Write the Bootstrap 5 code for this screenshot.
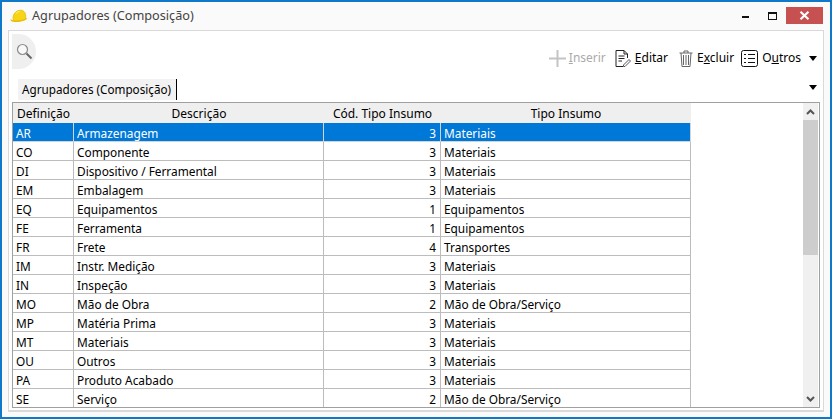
<!DOCTYPE html>
<html lang="pt"><head><meta charset="utf-8"><title>Agrupadores</title>
<link href="https://cdn.jsdelivr.net/npm/bootstrap@5.3.0/dist/css/bootstrap.min.css" rel="stylesheet">
<style>
html,body{margin:0;height:419px;overflow:hidden;background:#fff}
body{font-family:"Noto Sans","Liberation Sans",sans-serif;font-size:12px;color:#000}
.win{width:832px;height:419px;border:2px solid #0f78c8;background:#fafafa}
.ttl{height:28px;flex:none;padding-left:8px;padding-right:7px}
.ttl-text{font-size:12.7px;color:#444;margin-left:4px}
.wb{width:27px;height:17px;margin-top:-1px}
.wb-close{width:37px;background:#c75050}
.panel{margin:0 6px;height:382px;flex:none;border:1px solid #d9d9d9;border-bottom-width:2px;background:#fff;padding:3px}
.toprow{height:45px;flex:none;padding-right:3px}
.srch{width:24px;height:35px;background:#efefef;border-radius:0 18px 18px 0}
.tools{margin-top:15px}
.tool{gap:4px}
.tool.off{color:#aaa;gap:3px}
.g9{margin-left:9px}.g11{margin-left:11px}.g8{margin-left:8px}.g7{margin-left:7px}
.caret{width:0;height:0;border:4px solid transparent;border-top:5px solid #000;border-bottom:0}
.tabrow{height:23px;flex:none;padding-left:6px;padding-right:3px}
.tabx{background:#f2f2f2;height:21px;padding:0 4px;border-right:1px solid #000;line-height:21px;font-size:11.7px;width:159px;white-space:nowrap}
.tabrow .caret{margin-top:6px}
.gridbox{height:306px;flex:none;border:1px solid #a0a0a0}
.tbl{table-layout:fixed;border-collapse:separate;border-spacing:0;width:678px;flex:none;margin:0;align-self:flex-start}
.tbl th{background:#efefef;font-weight:400;height:20px;padding:0 4px;line-height:19px;border:0;text-align:center;white-space:nowrap}
.tbl td{height:19px;padding:2px 3px 0;line-height:16px;font-size:11.85px;border:solid #bcbcbc;border-width:0 1px 1px 0;white-space:nowrap;background:#fff}
.tbl td.text-end{padding-right:4px}
.tbl tr.sel td{background:#0078d7;color:#fff;border-bottom-color:#d4d4d4;border-right-color:#d4d4d4}
.sbar{width:15px;flex:none;background:#f0f0f0;margin-left:112px}
.sthumb{height:135px;background:#cdcdcd}
.sarr{height:17px;flex:none}
</style></head><body>
<div class="win d-flex flex-column">
 <div class="ttl d-flex align-items-center">
  <svg width="18" height="14" viewBox="0 0 18 14"><path d="M3.500 11.500C1.500 6 6 1.200 10.500 1.200 14.500 1.200 16.500 5 15.500 10 11 12 7 12 3.500 11.500Z" fill="#f7d516" stroke="#e0b400" stroke-width=".7"/><path d="M.5 10C3 12.500 12 12.500 16.500 9L17 10C12 13.500 4 13.800 1 12Z" fill="#e8bc00"/><path d="M6 4.500C7 3 8.500 2.500 10 2.500" fill="none" stroke="#fbe96a" stroke-width="1.200"/></svg>
  <span class="ttl-text">Agrupadores (Composição)</span>
  <div class="ms-auto d-flex align-items-center">
   <div class="wb d-flex align-items-center justify-content-center"><svg width="8" height="4"><rect width="7" height="2" y="2" fill="#111"/></svg></div>
   <div class="wb d-flex align-items-center justify-content-center"><svg width="9" height="8"><rect x=".5" y=".5" width="8" height="7" fill="none" stroke="#111"/><rect width="9" height="2" fill="#111"/></svg></div>
   <div class="wb wb-close d-flex align-items-center justify-content-center"><svg width="11" height="9"><path d="M1.500 .8L9.500 8.200M9.500 .8L1.500 8.200" stroke="#fff" stroke-width="2.200"/></svg></div>
  </div>
 </div>
 <div class="panel d-flex flex-column">
  <div class="toprow d-flex align-items-start">
   <div class="srch d-flex align-items-center justify-content-center"><svg width="17" height="17" viewBox="0 0 17 17"><circle cx="6.500" cy="6.500" r="5" fill="#f8f8f8" stroke="#8a8a8a" stroke-width="1.200"/><path d="M10.500 10.500L15.500 15.500" stroke="#666" stroke-width="2"/></svg></div>
   <div class="tools ms-auto d-flex align-items-center">
    <div class="tool off d-flex align-items-center"><svg width="17" height="17"><path d="M8.500 0V17M0 8.500H17" stroke="#c4c4c4" stroke-width="2"/></svg><span><u>I</u>nserir</span></div>
    <div class="tool g9 d-flex align-items-center"><svg width="16" height="17" viewBox="0 0 16 17"><path d="M1 .5H9L12.500 4V8M12.500 4H9V.5M8 16.500H1V.5M3.500 6H9.500M3.500 8.500H9.500M3.500 11H7" fill="none" stroke="#222"/><path d="M8.500 15L14 9.500 15.500 11 10 16.500H8.500Z" fill="none" stroke="#555"/></svg><span><u>E</u>ditar</span></div>
    <div class="tool g11 d-flex align-items-center"><svg width="14" height="17" viewBox="0 0 14 17"><path d="M.5 3H13.500M5 3V1H9V3M2 3L3 16.500H11L12 3M4.500 5V15M7 5V15M9.500 5V15" fill="none" stroke="#666"/></svg><span>E<u>x</u>cluir</span></div>
    <div class="tool g7 d-flex align-items-center"><svg width="17" height="17" viewBox="0 0 17 17"><rect x=".5" y=".5" width="16" height="16" rx="2" fill="none" stroke="#111"/><path d="M3 4.500H5M7 4.500H14M3 8.500H5M7 8.500H14M3 12.500H5M7 12.500H14" stroke="#111"/></svg><span>O<u>u</u>tros</span></div>
    <div class="caret g8"></div>
   </div>
  </div>
  <div class="tabrow d-flex align-items-start justify-content-between">
   <div class="tabx">Agrupadores (Composição)</div><div class="caret"></div>
  </div>
  <div class="gridbox d-flex overflow-hidden">
   <table class="tbl">
    <colgroup><col style="width:61px"><col style="width:250px"><col style="width:117px"><col style="width:250px"></colgroup>
    <thead><tr><th class="text-start">Definição</th><th>Descrição</th><th>Cód. Tipo Insumo</th><th>Tipo Insumo</th></tr></thead>
    <tbody>
    <tr class="sel"><td>AR</td><td>Armazenagem</td><td class="text-end">3</td><td>Materiais</td></tr>
    <tr><td>CO</td><td>Componente</td><td class="text-end">3</td><td>Materiais</td></tr>
    <tr><td>DI</td><td>Dispositivo / Ferramental</td><td class="text-end">3</td><td>Materiais</td></tr>
    <tr><td>EM</td><td>Embalagem</td><td class="text-end">3</td><td>Materiais</td></tr>
    <tr><td>EQ</td><td>Equipamentos</td><td class="text-end">1</td><td>Equipamentos</td></tr>
    <tr><td>FE</td><td>Ferramenta</td><td class="text-end">1</td><td>Equipamentos</td></tr>
    <tr><td>FR</td><td>Frete</td><td class="text-end">4</td><td>Transportes</td></tr>
    <tr><td>IM</td><td>Instr. Medição</td><td class="text-end">3</td><td>Materiais</td></tr>
    <tr><td>IN</td><td>Inspeção</td><td class="text-end">3</td><td>Materiais</td></tr>
    <tr><td>MO</td><td>Mão de Obra</td><td class="text-end">2</td><td>Mão de Obra/Serviço</td></tr>
    <tr><td>MP</td><td>Matéria Prima</td><td class="text-end">3</td><td>Materiais</td></tr>
    <tr><td>MT</td><td>Materiais</td><td class="text-end">3</td><td>Materiais</td></tr>
    <tr><td>OU</td><td>Outros</td><td class="text-end">3</td><td>Materiais</td></tr>
    <tr><td>PA</td><td>Produto Acabado</td><td class="text-end">3</td><td>Materiais</td></tr>
    <tr><td>SE</td><td>Serviço</td><td class="text-end">2</td><td>Mão de Obra/Serviço</td></tr>
    </tbody>
   </table>
   <div class="sbar d-flex flex-column">
    <div class="sarr d-flex align-items-center justify-content-center"><svg width="9" height="6"><path d="M1 5L4.500 1.500 8 5" fill="none" stroke="#555" stroke-width="2"/></svg></div>
    <div class="sthumb"></div>
    <div class="sarr mt-auto d-flex align-items-center justify-content-center"><svg width="9" height="6"><path d="M1 1L4.500 4.500 8 1" fill="none" stroke="#555" stroke-width="2"/></svg></div>
   </div>
  </div>
 </div>
</div>
</body></html>
